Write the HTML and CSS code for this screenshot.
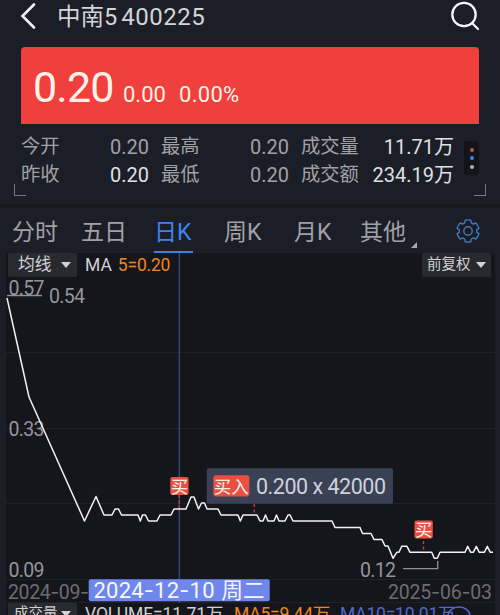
FILE: index.html
```html
<!DOCTYPE html>
<html lang="zh-CN">
<head>
<meta charset="utf-8">
<title>中南5 400225</title>
<link rel="stylesheet" href="styles.css">
</head>
<body>
<header class="header">
  <svg class="back" width="16" height="28" viewBox="0 0 16 28"><path d="M14 2.500 2.500 14 14 25.500"/></svg>
  <h1 class="title"><span class="name">中南5</span><span class="code">400225</span></h1>
  <svg class="search" width="32" height="32" viewBox="0 0 32 32"><circle cx="15" cy="14.500" r="11.700"/><path d="m23 23 6 6"/></svg>
</header>
<section class="price">
  <span class="last">0.20</span><span class="change">0.00</span><span class="percent">0.00%</span>
</section>
<section class="stats">
  <div class="grid">
    <span>今开</span><span class="num">0.20</span><span class="label">最高</span><span class="num">0.20</span><span class="label">成交量</span><span class="num lit">11.71万</span>
    <span>昨收</span><span class="num lit">0.20</span><span class="label">最低</span><span class="num">0.20</span><span class="label">成交额</span><span class="num lit">234.19万</span>
  </div>
  <div class="dots"><i class="red"></i><i class="blue"></i><i class="grey"></i></div>
  <i class="corner left"></i><i class="corner right"></i>
</section>
<nav class="tabs">
  <span>分时</span><span>五日</span><span class="active">日K</span><span>周K</span><span>月K</span><span class="more">其他</span>
  <svg class="gear" width="24" height="24" viewBox="0 0 24 24"><path d="M9.200 1.200Q12 .5 14.800 1.200L15.300 3.800 17.400 5.100 19.800 3.900Q22 6 22.900 9.300L20.700 10.800V13.200L22.900 14.700Q22 18 19.800 20.100L17.400 18.900 15.300 20.200 14.800 22.800Q12 23.500 9.200 22.800L8.700 20.200 6.600 18.900 4.200 20.100Q2 18 1.100 14.700L3.300 13.200V10.800L1.100 9.300Q2 6 4.200 3.900L6.600 5.100 8.700 3.800Z"/><circle cx="12" cy="12" r="4.200"/></svg>
</nav>
<main class="chart">
  <div class="tools">
    <span class="select avg">均线<i></i></span><span class="ma">MA</span><span class="ma5">5=0.20</span><span class="select adj">前复权<i></i></span>
  </div>
  <svg class="plot" width="500" height="350" viewBox="0 253 500 350">
    <path class="rule" d="M6 352.500H495M6 428.500H495M6 503.500H495M6 579.500H495M6 602.500H495"/>
    <g class="axis">
      <text x="8.500" y="294.500" textLength="36">0.57</text>
      <text x="49" y="302.500" textLength="36">0.54</text>
      <text x="8.500" y="435.500" textLength="36">0.33</text>
      <text x="8.500" y="576.500" textLength="36">0.09</text>
      <text x="360" y="576.500" textLength="36">0.12</text>
    </g>
    <g class="dates">
      <text x="8" y="598.500" textLength="81">2024<tspan class="dash">-</tspan>09<tspan class="dash">-</tspan></text>
      <text x="388" y="598.500" textLength="104">2025<tspan class="dash">-</tspan>06<tspan class="dash">-</tspan>03</text>
    </g>
    <path class="leader" d="M7 295.500H42M403 568.700H437.700V561"/>
    <path class="cursor" d="M179.300 253V603"/>
    <path class="mark" d="M179.300 495V510M254.200 504V514M423.500 541V552"/>
    <path class="line" d="M7 298 29 397 84.500 521 96 496.500 104 515H112L115 509H118.500L121.500 515H138L140.300 521 142.500 515H145.500L148.500 521H157L160 515H171L174 509H186L191 497H194L198.500 509 201.500 503H204.500L207 509H218L221 515H238L240.300 521 243 515H257L260 521H263L265.500 515 268 521H274L276.500 515 279 521H285L288 515H290L293 521H332L335 527.500H360L362.500 533.500H371L374 539.500H382L385 546H388L393 558.300 396.700 552.300H399L401.700 546.300H407L410 552.300H431.700L434.300 558.300H437.300L440 552.300H465L467.700 546.300 470.700 552.300H473.300L476.300 546.300 479.300 552.300H484.300L487.300 546.300 490.300 552.300H493"/>
    <rect class="buy" x="170.300" y="477" width="18.300" height="18" rx="2"/>
    <text class="buy-text" x="170.700" y="492.500" textLength="17.500">买</text>
    <rect class="buy" x="414.500" y="520.500" width="18.300" height="18" rx="2"/>
    <text class="buy-text" x="414.900" y="536" textLength="17.500">买</text>
    <rect class="tip" x="206.700" y="468.300" width="186.300" height="35.500" rx="2"/>
    <rect class="buy" x="213.300" y="475.300" width="36" height="21.300" rx="3"/>
    <text class="tip-tag" x="213.800" y="492.500" textLength="35">买入</text>
    <text class="tip-text" x="256" y="493.500" textLength="130">0.200 x 42000</text>
    <rect class="day" x="88.700" y="579.300" width="181" height="22" rx="2"/>
    <text class="day-text" x="93.500" y="598" textLength="121">2024<tspan class="dash">-</tspan>12<tspan class="dash">-</tspan>10</text>
    <text class="day-text week" x="221.500" y="598" textLength="43">周二</text>
  </svg>
  <div class="volume">
    <span class="select vol">成交量<i></i></span><span class="v0">VOLUME=11.71万</span><span class="v5">MA5=9.44万</span><span class="v10">MA10=10.01万</span>
    <svg class="ring" width="26" height="13" viewBox="0 0 26 13"><ellipse cx="13" cy="13" rx="11" ry="9"/></svg>
  </div>
</main>
</body>
</html>
```
FILE: styles.css
```css
* { box-sizing: border-box; }
body {
  margin: 0;
  width: 500px;
  height: 615px;
  overflow: hidden;
  background: #1c1e27;
  color: #a0a1a6;
  font-family: Roboto, "Noto Sans CJK SC", sans-serif;
}
svg { display: block; flex: none; fill: none; }
i { display: block; flex: none; }

.header { display: flex; align-items: center; height: 47px; padding: 0 19px 15px 20px; }
.back { stroke: #f1f2f5; stroke-width: 2.6; stroke-linecap: round; }
.title { display: flex; align-items: baseline; gap: 4px; margin: 2px 0 0 21px; font-weight: 400; line-height: 32px; color: #d3d4d8; }
.name { font-size: 23.500px; }
.code { font-size: 24px; letter-spacing: .5px; }
.search { margin-left: auto; stroke: #f7f7f9; stroke-width: 2.3; stroke-linecap: round; }

.price {
  display: flex; align-items: baseline;
  height: 77px; margin: 0 21px; padding-left: 12px;
  background: #ef403d; border-radius: 4px 4px 0 0;
  color: #fff3e8; line-height: 80px;
}
.last { width: 90px; font-size: 43px; letter-spacing: -.8px; }
.change { width: 56px; font-size: 22px; }
.percent { font-size: 22px; letter-spacing: .3px; }

.stats { position: relative; display: flex; height: 80px; padding: 9px 20px 0 21px; }
.grid {
  display: grid; grid-template-columns: 60px 68px 72px 68px 70px 95px; grid-auto-rows: 28px;
  width: 433px; font-size: 19.300px; line-height: 28px;
}
.num { font-size: 20px; text-align: right; white-space: nowrap; }
.label { padding-left: 12px; white-space: nowrap; }
.lit { color: #dfe0e4; }
.dots { display: flex; flex-direction: column; align-items: center; justify-content: center; gap: 4.500px; width: 15px; height: 34px; margin: 8px 0 0 10px; background: #13141a; border-radius: 3px; }
.dots i { width: 4px; height: 4px; border-radius: 50%; }
.red { background: #c4543a; }
.blue { background: #3f86e8; }
.grey { background: #b1b1b4; }
.corner { position: absolute; top: 60px; width: 12px; height: 12px; border: 1px solid #74767d; border-top: 0; }
.left { left: 14px; border-right: 0; }
.right { right: 14px; border-left: 0; }

.tabs { display: flex; height: 49px; padding: 5px 20px 0 12px; border-top: 4px solid #16181e; font-size: 23px; line-height: 40px; }
.tabs span { width: 69px; white-space: nowrap; }
.tabs span:nth-child(2) { width: 73px; }
.tabs .active { width: 39px; height: 40px; margin: 0 31px 0 0; border-bottom: 2px solid #437fd8; color: #3f83ec; }
.tabs span:nth-child(4) { width: 70px; }
.tabs .more { position: relative; width: 46px; margin-left: -3px; }
.more::after { content: ""; position: absolute; right: -11px; bottom: 5px; border: 3.500px solid #a8a9ad; border-top-color: transparent; border-left-color: transparent; }
.gear { margin: 6px 0 0 auto; stroke: #4178bd; stroke-width: 1.4; stroke-linejoin: round; }

.chart { height: 362px; background: linear-gradient(90deg, #1b1d27 6px, #15161b 6px 495px, #1b1d27 495px); }
.tools { position: relative; display: flex; align-items: center; height: 24px; margin-bottom: -24px; padding: 0 9px 0 8px; font-size: 17.500px; color: #d0d1d4; z-index: 1; }
.select { display: flex; align-items: center; justify-content: space-between; width: 69px; height: 24px; padding: 0 6px 0 10px; border-radius: 2px; background: #292a2f; color: #d1d1d4; font-size: 16.700px; line-height: 24px; white-space: nowrap; }
.select i { border: 5px solid transparent; border-top: 6px solid #d3d3d5; border-bottom: 0; }
.ma { margin-left: 8px; }
.ma5 { margin-left: 6px; color: #ed861d; letter-spacing: -.2px; }
.adj { margin-left: auto; padding: 0 5px; font-size: 14.500px; }
.rule { stroke: #1f2127; }
.plot text { font-size: 19.500px; }
.dash { font-family: Inter, sans-serif; }
.axis { fill: #94959a; }
.dates { fill: #6c6d73; }
.leader { stroke: #919298; stroke-width: 1.3; }
.cursor { stroke: #344579; stroke-width: 1.500; }
.mark { stroke: #b9483d; stroke-width: 1.400; stroke-dasharray: 3 2.500; }
.line { stroke: #f2f2f3; stroke-width: 1.500; stroke-linejoin: round; }
.buy { fill: #ec4f42; }
.plot .buy-text { fill: #fff2e8; font-size: 17.500px; }
.tip { fill: #3b4155; }
.plot .tip-tag { fill: #fff2e8; font-size: 17.500px; }
.plot .tip-text { fill: #cfd1dc; font-size: 21.500px; }
.day { fill: #6f86ea; }
.plot .day-text { fill: #f7f8ff; font-size: 22px; }
.plot .week { font-size: 21.500px; }
.volume { display: flex; height: 12px; overflow: hidden; font-size: 17.500px; line-height: 23px; white-space: nowrap; padding-left: 8px; }
.vol { font-size: 14.500px; line-height: 22px; height: 22px; padding-left: 6px; }
.v0 { width: 141px; margin-left: 8px; color: #d0d1d4; letter-spacing: -.1px; }
.v5 { width: 97px; margin-left: 8px; color: #ed861d; letter-spacing: -.2px; }
.v10 { width: 116px; margin-left: 9px; color: #5068ce; letter-spacing: -.2px; }
.ring { margin-left: -10px; stroke: #5068ce; stroke-width: 1.500; }
```
